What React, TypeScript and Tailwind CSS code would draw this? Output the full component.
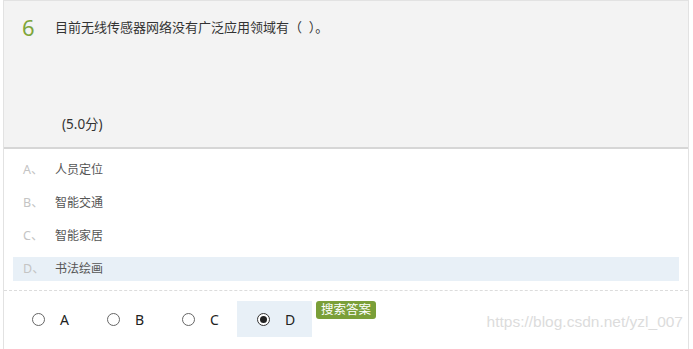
const options = [
  { key: "A", text: "人员定位" },
  { key: "B", text: "智能交通" },
  { key: "C", text: "智能家居" },
  { key: "D", text: "书法绘画" },
];

const selected = "D";

function Radio({ checked }: { checked: boolean }) {
  return (
    <span
      className={`flex h-[13px] w-[13px] items-center justify-center rounded-full border ${
        checked ? "border-[#333]" : "border-[#666]"
      } bg-white`}
    >
      {checked ? <span className="h-[7px] w-[7px] rounded-full bg-[#222]" /> : null}
    </span>
  );
}

export default function App() {
  return (
    <div
      className="relative h-[349px] w-[693px] overflow-hidden bg-white"
      style={{ fontFamily: '"Noto Sans", "Noto Sans CJK SC", sans-serif' }}
    >
      <div className="ml-[3px] h-full w-[686px] border-x border-t border-[#e2e2e2]">
        {/* question */}
        <div className="h-[148px] border-b-2 border-[#d6d6d6] bg-[#f3f3f3]">
          <div className="flex items-center pt-[11px]">
            <span className="ml-[18px] w-[33px] text-[22px] leading-[30px] text-[#7ea53a]">6</span>
            <span className="text-[13px] leading-[30px] text-[#333]">
              目前无线传感器网络没有广泛应用领域有（{"\u00a0\u00a0"}）。
            </span>
          </div>
          <div className="ml-[58px] mt-[72px] text-[13.5px] leading-[20px] text-[#333]">(5.0分)</div>
        </div>

        {/* options */}
        <div className="pt-[9px]">
          {options.map((o) => (
            <div
              key={o.key}
              className={`mx-[9px] mb-[9px] flex h-[24px] items-center ${
                o.key === selected ? "bg-[#e8f0f7]" : ""
              }`}
            >
              <span className="ml-[10px] w-[32px] text-[12.5px] text-[#c4c4c4]">{o.key}、</span>
              <span className="text-[12px] text-[#555]">{o.text}</span>
            </div>
          ))}
        </div>

        {/* answer */}
        <div className="border-t border-dashed border-[#dcdcdc]">
          <div className="ml-[8px] mt-[10px] flex items-start">
            {options.map((o) => (
              <div
                key={o.key}
                className={`flex h-[36px] w-[75px] items-center ${
                  o.key === selected ? "bg-[#e8f0f7]" : ""
                }`}
              >
                <span className="ml-[20px]">
                  <Radio checked={o.key === selected} />
                </span>
                <span className="ml-[15px] text-[14px] text-[#222]">{o.key}</span>
              </div>
            ))}
            <span className="ml-[4px] flex h-[18px] items-center rounded-[3px] bg-[#7a9f38] px-[5px] text-[12.5px] leading-none text-white">
              搜索答案
            </span>
          </div>
        </div>
      </div>

      <span
        className="absolute right-[10px] top-[310px] text-[15.5px] text-[#dcdcdc]"
        style={{ fontFamily: '"Liberation Sans", Arial, sans-serif' }}
      >
        https://blog.csdn.net/yzl_007
      </span>
    </div>
  );
}
